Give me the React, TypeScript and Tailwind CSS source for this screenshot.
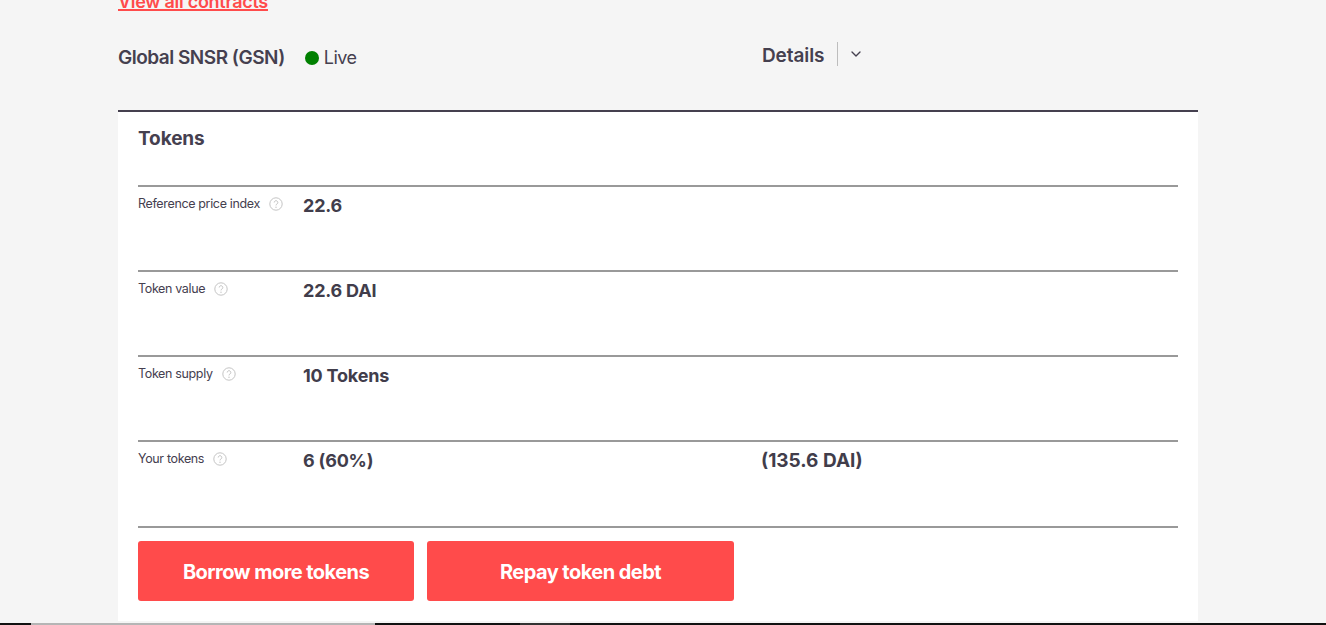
import React from 'react';
import { ChevronDown } from 'lucide-react';

const rows = [
  { label: 'Reference price index', value: '22.6', extra: '', height: 'h-[85px]' },
  { label: 'Token value', value: '22.6 DAI', extra: '', height: 'h-[85px]' },
  { label: 'Token supply', value: '10 Tokens', extra: '', height: 'h-[85px]' },
  { label: 'Your tokens', value: '6 (60%)', extra: '(135.6 DAI)', height: 'h-[86px]' },
];

const HelpIcon = () => (
  <svg width="14" height="14" viewBox="0 0 14 14" fill="none" className="shrink-0">
    <circle cx="7" cy="7" r="6.2" stroke="#c4c4c4" strokeWidth="1" />
    <path d="M5.2 5.5a1.8 1.8 0 1 1 2.8 1.5c-.7.4-1 .7-1 1.4" stroke="#c4c4c4" strokeWidth="1" />
    <circle cx="7" cy="10.3" r=".7" fill="#c4c4c4" />
  </svg>
);

const TokenRow: React.FC<{ row: (typeof rows)[number] }> = ({ row }) => (
  <div className={`${row.height} border-t-2 border-[#999999] flex`}>
    <div className="w-[165px] shrink-0 flex items-start pt-[9px]">
      <span className="text-[12.5px] leading-[16px] tracking-[-0.35px] text-[#45404f]">{row.label}</span>
      <span className="ml-[9px] mt-[1px]"><HelpIcon /></span>
    </div>
    <div className="w-[458px] shrink-0 pt-[7px] text-[18px] leading-[24px] font-bold tracking-[-0.2px] text-[#413d4b]">{row.value}</div>
    <div className="pt-[7px] text-[19px] leading-[24px] font-bold text-[#413d4b]">{row.extra}</div>
  </div>
);

export default function App() {
  return (
    <div className="relative h-[625px] overflow-hidden bg-[#f5f5f5] font-['Inter',sans-serif]">
      <div className="w-[1080px] ml-[118px] -mt-[7px]">
        <a className="block w-fit text-[18px] leading-[18px] font-semibold tracking-[-0.27px] text-[#ff4b4b] underline decoration-2">View all contracts</a>

        <div className="flex mt-[26px] h-[46px]">
          <div className="w-[644px] flex items-start pt-[9px]">
            <span className="text-[19px] leading-[24px] font-semibold tracking-[-0.5px] text-[#45404f]">Global SNSR (GSN)</span>
            <span className="ml-[20px] mt-[5px] w-[14px] h-[14px] rounded-full bg-[#008000]" />
            <span className="ml-[5px] text-[18px] leading-[24px] tracking-[-0.5px] text-[#45404f]">Live</span>
          </div>
          <div className="flex items-start">
            <span className="mt-[7px] text-[19px] leading-[24px] font-semibold tracking-[-0.1px] text-[#45404f]">Details</span>
            <span className="ml-[13px] mt-[5px] w-px h-[24px] bg-[#bdbdbd]" />
            <ChevronDown size={16} strokeWidth={2} className="ml-[10px] mt-[9px] text-[#45404f]" />
          </div>
        </div>

        <div className="mt-[27px] bg-white border-t-2 border-[#45404f] px-[20px] h-[511px]">
          <h2 className="pt-[15px] h-[73px] text-[19px] leading-[24px] font-bold tracking-[-0.1px] text-[#45404f]">Tokens</h2>
          {rows.map(row => <TokenRow key={row.label} row={row} />)}
          <div className="border-t-2 border-[#999999] flex gap-[13px] pt-[13px]">
            <button className="w-[276px] h-[60px] pt-[2px] rounded-[3px] bg-[#ff4b4b] text-white text-[20px] font-bold tracking-[-0.55px]">Borrow more tokens</button>
            <button className="w-[307px] h-[60px] pt-[2px] rounded-[3px] bg-[#ff4b4b] text-white text-[20px] font-bold tracking-[-0.55px]">Repay token debt</button>
          </div>
        </div>
      </div>

      <div className="absolute left-0 right-0 bottom-0 h-[2px] bg-[#111111] flex">
        <div className="ml-[31px] w-[344px] h-full bg-[#b5b5b5]" />
        <div className="ml-[145px] w-[50px] h-full bg-[#333333]" />
      </div>
    </div>
  );
}
